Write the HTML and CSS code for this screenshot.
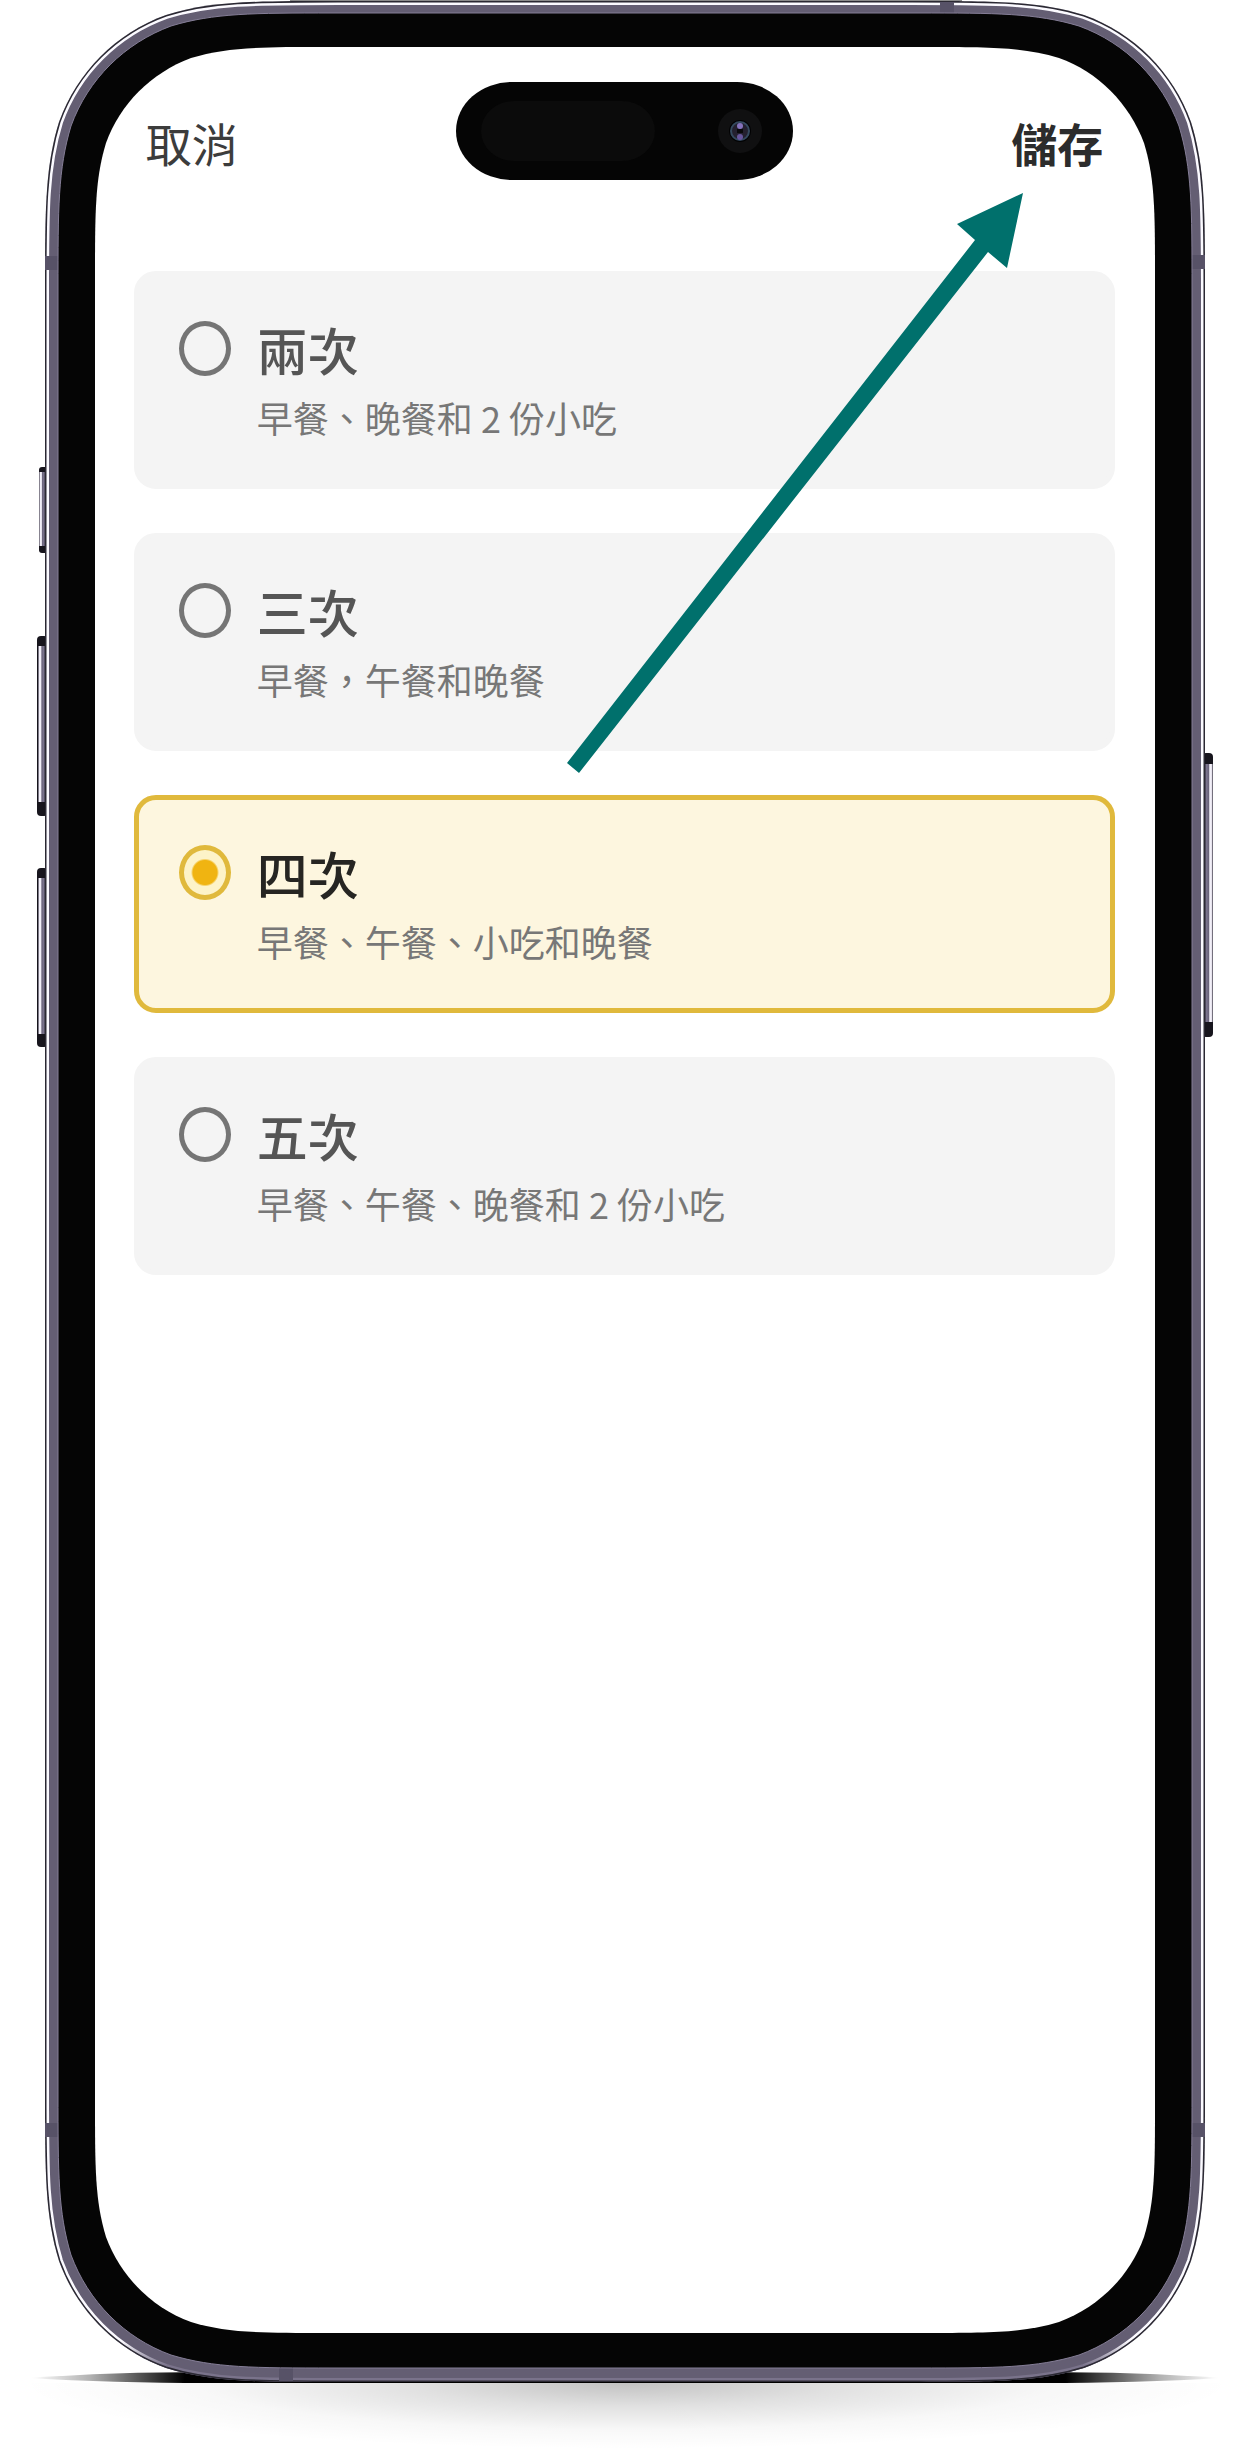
FILE: index.html
```html
<!DOCTYPE html>
<html lang="zh-Hant">
<head>
<meta charset="utf-8">
<meta name="viewport" content="width=device-width, initial-scale=1">
<title>用餐次數</title>
<link rel="stylesheet" href="styles.css">
</head>
<body>
<main class="device">
  <svg class="device-frame" viewBox="0 0 1253 2464" preserveAspectRatio="none" aria-hidden="true">
    <defs>
      <linearGradient id="floor" x1="0" x2="1" y1="0" y2="0">
        <stop offset="0" stop-color="#000" stop-opacity="0"/>
        <stop offset=".05" stop-color="#000" stop-opacity=".3"/>
        <stop offset=".13" stop-color="#000"/>
        <stop offset=".87" stop-color="#000"/>
        <stop offset=".95" stop-color="#000" stop-opacity=".3"/>
        <stop offset="1" stop-color="#000" stop-opacity="0"/>
      </linearGradient>
      <radialGradient id="shade" cx=".5" cy="0" r="1" gradientTransform="translate(.25 0) scale(.5 1)">
        <stop offset="0" stop-color="#000" stop-opacity=".24"/>
        <stop offset=".35" stop-color="#000" stop-opacity=".12"/>
        <stop offset=".7" stop-color="#000" stop-opacity=".03"/>
        <stop offset="1" stop-color="#000" stop-opacity="0"/>
      </radialGradient>
      <linearGradient id="key" x1="0" x2="1" y1="0" y2="0">
        <stop offset="0" stop-color="#3a3645"/>
        <stop offset=".2" stop-color="#f2eff8"/>
        <stop offset=".4" stop-color="#f2eff8"/>
        <stop offset=".55" stop-color="#6b647c"/>
        <stop offset=".85" stop-color="#7d7690"/>
        <stop offset="1" stop-color="#2c2936"/>
      </linearGradient>
      <linearGradient id="rim" gradientUnits="userSpaceOnUse" x1="0" y1="0" x2="0" y2="2464">
        <stop offset="0" stop-color="#fbfaff"/>
        <stop offset=".95" stop-color="#fbfaff"/>
        <stop offset=".96" stop-color="#7a738b"/>
      </linearGradient>
      <path id="body" d="M45 2089V294c0-84 0-127 14-172c18-50 57-89 107-107c45-14 88-14 172-14H912c84 0 127 0 172 14c50 18 89 57 107 107c14 45 14 88 14 172V2089c0 84 0 127-14 172c-18 50-57 89-107 107c-45 14-88 14-172 14H338c-84 0-127 0-172-14c-50-18-89-57-107-107c-14-45-14-88-14-172Z"/>
      <clipPath id="body-clip"><use href="#body"/></clipPath>
    </defs>
    <rect x="20" y="2383" width="1213" height="66" fill="url(#shade)"/>
    <path d="M30 2378Q110 2372 210 2372H1040Q1140 2372 1220 2378Q1140 2383 1040 2383H210Q110 2383 30 2378Z" fill="url(#floor)"/>
    <rect x="290" y="0" width="672" height="2" fill="#8b8b8b"/>
    <g fill="#17151d">
      <rect x="39" y="467" width="10" height="86" rx="3"/>
      <rect x="37" y="636" width="11" height="180" rx="4"/>
      <rect x="37" y="868" width="11" height="179" rx="4"/>
      <rect x="1202" y="753" width="11" height="284" rx="4"/>
    </g>
    <g fill="url(#key)">
      <rect x="39" y="472" width="6" height="74"/>
      <rect x="38" y="646" width="7" height="156"/>
      <rect x="38" y="878" width="7" height="156"/>
      <rect x="-1213" y="764" width="8" height="258" transform="scale(-1 1)"/>
    </g>
    <g clip-path="url(#body-clip)">
      <use href="#body" fill="#645e73"/>
      <use href="#body" fill="none" stroke="url(#rim)" stroke-width="8"/>
      <use href="#body" fill="none" stroke="#2b2933" stroke-width="3"/>
    </g>
    <g fill="#575267">
      <rect x="45" y="256" width="13" height="14"/>
      <rect x="1192" y="255" width="13" height="14"/>
      <rect x="45" y="2123" width="13" height="14"/>
      <rect x="1192" y="2123" width="13" height="14"/>
      <rect x="940" y="2" width="14" height="12"/>
      <rect x="279" y="2368" width="14" height="13"/>
    </g>
    <path fill="#050505" stroke="#857e97" d="M58 2093V288c0-79 0-119 13-162c17-47 54-83 100-100c43-13 82-13 162-13H917c79 0 119 0 162 13c47 17 83 54 100 100c13 43 13 82 13 162V2093c0 79 0 119-13 162c-17 47-54 83-100 100c-43 13-82 13-162 13H333c-79 0-119 0-162-13c-47-17-83-54-100-100c-13-43-13-82-13-162Z"/>
    <path fill="#fff" d="M95 2101V279c0-67 0-100 11-136c14-39 45-70 85-85c36-11 69-11 136-11H923c67 0 100 0 136 11c39 14 70 45 85 85c11 36 11 69 11 136V2101c0 67 0 100-11 136c-14 39-45 70-85 85c-36 11-69 11-136 11H327c-67 0-100 0-136-11c-39-14-70-45-85-85c-11-36-11-69-11-136Z"/>
    <rect x="456" y="82" width="337" height="98" rx="56" ry="49" fill="#050505"/>
    <rect x="481" y="101" width="174" height="60" rx="33" ry="30" fill="#0b0b0b"/>
    <circle cx="740" cy="131" r="22" fill="#101011"/>
    <circle cx="740" cy="131" r="11" fill="#020203"/>
    <circle cx="740" cy="131" r="9" fill="#24202f" stroke="#34495e" stroke-width="2"/>
    <circle cx="740" cy="126" r="3" fill="#8573bd"/>
    <circle cx="740" cy="137" r="3" fill="#66559c"/>
    <rect x="737" y="129" width="6" height="4" fill="#08080b"/>
  </svg>

  <form class="screen">
    <header class="toolbar">
      <button type="button" class="action">取消</button>
      <button type="submit" class="action action-save">儲存</button>
    </header>
    <div class="options" role="radiogroup" aria-label="用餐次數">
      <label class="option">
        <input type="radio" name="meals" value="2">
        <span class="option-text"><span class="option-title">兩次</span><span class="option-note">早餐、晚餐和 2 份小吃</span></span>
      </label>
      <label class="option">
        <input type="radio" name="meals" value="3">
        <span class="option-text"><span class="option-title">三次</span><span class="option-note">早餐，午餐和晚餐</span></span>
      </label>
      <label class="option">
        <input type="radio" name="meals" value="4" checked>
        <span class="option-text"><span class="option-title">四次</span><span class="option-note">早餐、午餐、小吃和晚餐</span></span>
      </label>
      <label class="option">
        <input type="radio" name="meals" value="5">
        <span class="option-text"><span class="option-title">五次</span><span class="option-note">早餐、午餐、晚餐和 2 份小吃</span></span>
      </label>
    </div>
  </form>

  <svg class="pointer" viewBox="0 0 1253 2464" preserveAspectRatio="none" aria-hidden="true">
    <path fill="#00706c" d="M1023 193L957 224L975 240L567 763L579 773L988 252L1007 268Z"/>
  </svg>
</main>
</body>
</html>
```
FILE: styles.css
```css
* {
  box-sizing: border-box;
}

body {
  margin: 0;
  background: #fff;
  font-family: "Noto Sans CJK TC", "Noto Sans", sans-serif;
}

.device {
  position: relative;
  width: 100%;
  aspect-ratio: 1253 / 2464;
}

/* Phone body and the pointer arrow stretch with the device box */
.device-frame,
.pointer {
  position: absolute;
  inset: 0;
  width: 100%;
  height: 100%;
}

.pointer {
  pointer-events: none;
}

.screen {
  position: relative;
  padding: 108px 11% 0;
}

.toolbar {
  display: flex;
  justify-content: space-between;
  padding: 0 12px 0 8px;
}

.action {
  padding: 0;
  border: 0;
  background: none;
  color: #3c3c3c;
  font: inherit;
  font-size: 46px;
  line-height: 68px;
}

.action-save {
  color: #2c2c2c;
  font-weight: 700;
}

.options {
  display: flex;
  flex-direction: column;
  gap: 44px;
  margin: 95px 0 0 -4px;
}

.option {
  display: flex;
  gap: 26px;
  min-height: 218px;
  padding: 45px 40px;
  border: 5px solid #f4f4f4;
  border-radius: 22px;
  background: #f4f4f4;
}

.option:has(:checked) {
  border-color: #e0b93c;
  background: #fdf6df;
}

.option input {
  flex: none;
  appearance: none;
  width: 52px;
  height: 55px;
  margin: 0;
  border: 5px solid #757575;
  border-radius: 50%;
}

.option input:checked {
  border-color: #e0b93c;
  background: radial-gradient(circle, #f0b411 12px, #fdf3c8 14px);
}

.option-text {
  display: flex;
  flex-direction: column;
  gap: 18px;
}

.option-title {
  color: #555;
  font-size: 51px;
  font-weight: 500;
  line-height: 56px;
}

.option:has(:checked) .option-title {
  color: #262522;
}

.option-note {
  color: #777;
  font-size: 36px;
  line-height: 44px;
}
```
